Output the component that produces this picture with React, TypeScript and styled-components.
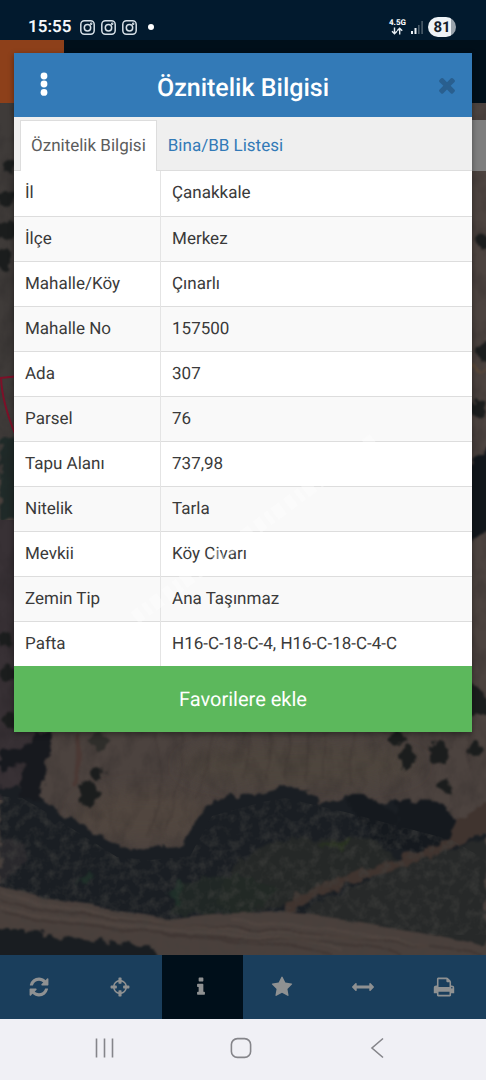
import React from "react";
import styled, { createGlobalStyle } from "styled-components";

const GlobalStyle = createGlobalStyle`
  *, *::before, *::after { box-sizing: border-box; }
  body {
    margin: 0;
    background: #021a2e;
    font-family: Roboto, "Noto Sans", sans-serif;
    color: #3a3a3a;
    text-rendering: geometricPrecision;
  }
  button { font-family: inherit; text-rendering: inherit; border: 0; padding: 0; cursor: pointer; }
`;

const Screen = styled.div`
  display: flex;
  flex-direction: column;
  min-height: 100vh;
`;

const StatusBar = styled.header`
  display: flex;
  align-items: center;
  justify-content: space-between;
  height: 40px;
  padding: 14px 30px 0 28px;
  background: #021a2e;
  color: #f4f8fb;
`;

const StatusGroup = styled.div<{ $gap: number }>`
  display: flex;
  align-items: center;
  gap: ${(p) => p.$gap}px;
`;

const Clock = styled.time`
  margin-right: 3px;
  font-size: 17px;
  line-height: 20px;
  font-weight: 600;
`;

const Dot = styled.span`
  width: 6px;
  height: 6px;
  margin-left: 5px;
  border-radius: 50%;
  background: #fff;
`;

const Network = styled.div`
  display: flex;
  flex-direction: column;
  align-items: center;
  font-size: 8px;
  line-height: 8px;
  font-weight: 800;
`;

const Battery = styled.div`
  width: 28px;
  height: 20px;
  border-radius: 10px;
  background: linear-gradient(90deg, #eef3f7 82%, #9aa4ad 82%);
  color: #14202b;
  font-size: 15px;
  line-height: 20px;
  font-weight: 700;
  text-align: center;
`;

const Stage = styled.main`
  flex: 1;
  display: grid;
  grid-template-columns: minmax(0, 1fr);
`;

const Backdrop = styled.div`
  grid-area: 1 / 1;
  display: flex;
  flex-direction: column;
`;

const AppHeader = styled.div`
  height: 63px;
  background: #000f1a;
`;

const MenuTile = styled.div`
  width: 64px;
  height: 63px;
  background: #8d401a;
`;

const MapArea = styled.div`
  flex: 1;
  position: relative;
  padding-top: 17px;
  background: #403835;
`;

const MapDrawing = styled.svg`
  position: absolute;
  inset: 0;
  width: 100%;
  height: 100%;
`;

const MapPanel = styled.div`
  position: relative;
  height: 51px;
  margin-left: 50%;
  background: #7e7e7e;
`;

const Dialog = styled.section`
  grid-area: 1 / 1;
  align-self: start;
  position: relative;
  margin: 13px 14px 0;
  background: #fff;
  box-shadow: 0 2px 6px rgba(0, 0, 0, 0.4);
`;

const DialogHeader = styled.div`
  display: grid;
  grid-template-columns: 60px 1fr 60px;
  align-items: center;
  height: 64px;
  background: #337ab7;
`;

const DialogTitle = styled.h1`
  margin: 0;
  padding-top: 8px;
  color: #fff;
  font-size: 25px;
  line-height: 30px;
  font-weight: 500;
  text-align: center;
  white-space: nowrap;
`;

const HeaderButton = styled.button<{ $side: "left" | "right" }>`
  display: flex;
  align-items: center;
  justify-content: ${(p) => (p.$side === "left" ? "center" : "flex-end")};
  height: 64px;
  padding-right: ${(p) => (p.$side === "left" ? 0 : 13)}px;
  background: none;
  color: ${(p) => (p.$side === "left" ? "#fff" : "#295f8f")};
`;

const Tabs = styled.div`
  display: flex;
  height: 54px;
  padding: 3px 6px 0;
  background: #efefef;
  border-bottom: 1px solid #ddd;
`;

const Tab = styled.button<{ $active?: boolean }>`
  height: 51px;
  margin-bottom: -1px;
  padding: 0 10px;
  border: 1px solid ${(p) => (p.$active ? "#ddd" : "transparent")};
  border-bottom: 0;
  background: ${(p) => (p.$active ? "#fff" : "transparent")};
  color: ${(p) => (p.$active ? "#5c5c5c" : "#337ab7")};
  font-size: 17px;
  line-height: 24px;
  white-space: nowrap;
`;

const Table = styled.table`
  width: 100%;
  border-collapse: collapse;
  table-layout: fixed;
  font-size: 17px;
  line-height: 24px;
`;

const Row = styled.tr`
  height: 45px;
  &:nth-child(even) { background: #f9f9f9; }
  & + & > * { border-top: 1px solid #ddd; }
`;

const Label = styled.th`
  width: 32%;
  padding: 0 11px;
  border-right: 1px solid #e4e4e4;
  font-weight: 400;
  text-align: left;
`;

const Value = styled.td`
  padding: 0 11px;
`;

const FavoriteButton = styled.button`
  display: block;
  width: 100%;
  height: 66px;
  background: #5cb85c;
  color: #fff;
  font-size: 20px;
  line-height: 24px;
`;

const Watermark = styled.svg`
  position: absolute;
  left: 106px;
  top: 370px;
  pointer-events: none;
`;

const Toolbar = styled.nav`
  display: grid;
  grid-template-columns: repeat(6, 1fr);
  height: 64px;
  background: #1a3e5c;
`;

const Tool = styled.button<{ $active?: boolean }>`
  display: flex;
  align-items: center;
  justify-content: center;
  padding-right: 3px;
  background: ${(p) => (p.$active ? "#000f1a" : "transparent")};
  color: #8f9192;
`;

const SystemNav = styled.nav`
  display: flex;
  align-items: center;
  justify-content: space-between;
  height: 61px;
  padding: 0 96px 4px 92px;
  background: #f0f0f5;
`;

const NavButton = styled.button`
  display: flex;
  background: none;
  color: #85858a;
`;

const glyphs = {
  refresh:
    "M1639 1056q0 5-1 7-64 268-268 434.5t-478 166.5q-146 0-282.5-55t-243.5-157l-129 129q-19 19-45 19t-45-19-19-45v-448q0-26 19-45t45-19h448q26 0 45 19t19 45-19 45l-137 137q71 66 161 102t187 36q134 0 250-65t186-179q11-17 53-117 8-23 30-23h192q13 0 22.5 9.5t9.5 22.5zm25-800v448q0 26-19 45t-45 19h-448q-26 0-45-19t-19-45 19-45l138-138q-148-137-349-137-134 0-250 65t-186 179q-11 17-53 117-8 23-30 23h-199q-13 0-22.5-9.5t-9.5-22.5v-7q65-268 270-434.5t480-166.5q146 0 284 55.5t245 156.5l130-129q19-19 45-19t45 19 19 45z",
  target:
    "M1325 1024h-109q-26 0-45-19t-19-45v-128q0-26 19-45t45-19h109q-32-108-112.5-188.5t-188.5-112.5v109q0 26-19 45t-45 19h-128q-26 0-45-19t-19-45v-109q-108 32-188.5 112.5t-112.5 188.5h109q26 0 45 19t19 45v128q0 26-19 45t-45 19h-109q32 108 112.5 188.5t188.5 112.5v-109q0-26 19-45t45-19h128q26 0 45 19t19 45v109q108-32 188.5-112.5t112.5-188.5zm339-192v128q0 26-19 45t-45 19h-143q-37 161-154.5 278.5t-278.5 154.5v143q0 26-19 45t-45 19h-128q-26 0-45-19t-19-45v-143q-161-37-278.5-154.5t-154.5-278.5h-143q-26 0-45-19t-19-45v-128q0-26 19-45t45-19h143q37-161 154.5-278.5t278.5-154.5v-143q0-26 19-45t45-19h128q26 0 45 19t19 45v143q161 37 278.5 154.5t154.5 278.5h143q26 0 45 19t19 45z",
  info:
    "M1216 1344v128q0 26-19 45t-45 19h-512q-26 0-45-19t-19-45v-128q0-26 19-45t45-19h64v-384h-64q-26 0-45-19t-19-45v-128q0-26 19-45t45-19h384q26 0 45 19t19 45v576h64q26 0 45 19t19 45zm-128-1152v192q0 26-19 45t-45 19h-256q-26 0-45-19t-19-45v-192q0-26 19-45t45-19h256q26 0 45 19t19 45z",
  star:
    "M1728 647q0 22-26 48l-363 354 86 500q1 7 1 20 0 21-10.5 35.5t-30.5 14.5q-19 0-40-12l-449-236-449 236q-22 12-40 12-21 0-31.5-14.5t-10.5-35.5q0-6 2-20l86-500-364-354q-25-27-25-48 0-37 56-46l502-73 225-455q19-41 49-41t49 41l225 455 502 73q56 9 56 46z",
  arrows:
    "M1792 896q0 26-19 45l-256 256q-19 19-45 19t-45-19-19-45v-128h-1024v128q0 26-19 45t-45 19-45-19l-256-256q-19-19-19-45t19-45l256-256q19-19 45-19t45 19 19 45v128h1024v-128q0-26 19-45t45-19 45 19l256 256q19 19 19 45z",
  print:
    "M448 1536h896v-256h-896v256zm0-640h896v-384h-160q-40 0-68-28t-28-68v-160h-640v640zm1152 64q0-26-19-45t-45-19-45 19-19 45 19 45 45 19 45-19 19-45zm128 0v416q0 13-9.5 22.5t-22.5 9.5h-224v160q0 40-28 68t-68 28h-960q-40 0-68-28t-28-68v-160h-224q-13 0-22.5-9.5t-9.5-22.5v-416q0-79 56.5-135.5t135.5-56.5h64v-544q0-40 28-68t68-28h672q40 0 88 20t76 48l152 152q28 28 48 76t20 88v256h64q79 0 135.5 56.5t56.5 135.5z",
  close:
    "M1490 1322q0 40-28 68l-136 136q-28 28-68 28t-68-28l-294-294-294 294q-28 28-68 28t-68-28l-136-136q-28-28-28-68t28-68l294-294-294-294q-28-28-28-68t28-68l136-136q28-28 68-28t68 28l294 294 294-294q28-28 68-28t68 28l136 136q28 28 28 68t-28 68l-294 294 294 294q28 28 28 68z",
};

type GlyphName = keyof typeof glyphs;

const Glyph = ({ name, size }: { name: GlyphName; size: number }) => (
  <svg width={size} height={size} viewBox="0 0 1792 1792" fill="currentColor" aria-hidden="true">
    <path d={glyphs[name]} />
  </svg>
);

const CameraIcon = () => (
  <svg width="15" height="15" viewBox="0 0 15 15" fill="none" stroke="#d7e0e7" strokeWidth="1.5" aria-hidden="true">
    <rect x="0.8" y="0.8" width="13.4" height="13.4" rx="3.6" />
    <circle cx="7.5" cy="7.7" r="3.2" />
    <circle cx="11.2" cy="3.8" r="0.5" />
  </svg>
);

const Satellite = () => (
  <MapDrawing viewBox="0 103 486 852" preserveAspectRatio="xMidYMax slice" aria-hidden="true">
    <defs>
      <filter id="rough" x="-5%" y="-5%" width="110%" height="110%" colorInterpolationFilters="sRGB">
        <feTurbulence type="fractalNoise" baseFrequency="0.09" numOctaves="3" seed="4" result="n" />
        <feDisplacementMap in="SourceGraphic" in2="n" scale="13" xChannelSelector="R" yChannelSelector="G" result="d" />
        <feGaussianBlur in="d" stdDeviation="1" />
      </filter>
      <filter id="wavy" x="-5%" y="-5%" width="110%" height="110%" colorInterpolationFilters="sRGB">
        <feTurbulence type="fractalNoise" baseFrequency="0.03" numOctaves="2" seed="6" result="n" />
        <feDisplacementMap in="SourceGraphic" in2="n" scale="9" xChannelSelector="R" yChannelSelector="G" result="d" />
        <feGaussianBlur in="d" stdDeviation="1.2" />
      </filter>
      <filter id="soft" x="-40%" y="-40%" width="180%" height="180%"><feGaussianBlur stdDeviation="9" /></filter>
      <filter id="leaves" x="0" y="0" width="100%" height="100%" colorInterpolationFilters="sRGB">
        <feTurbulence type="fractalNoise" baseFrequency="0.1" numOctaves="3" seed="9" />
        <feColorMatrix values="0 0 0 0 0.26  0 0 0 0 0.26  0 0 0 0 0.25  2.4 0 0 0 -1" result="n" />
        <feComposite in="n" in2="SourceAlpha" operator="in" />
      </filter>
      <filter id="grain" x="0" y="0" width="100%" height="100%" colorInterpolationFilters="sRGB">
        <feTurbulence type="fractalNoise" baseFrequency="0.06 0.04" numOctaves="4" seed="2" />
        <feColorMatrix values="0 0 0 0 0.1  0 0 0 0 0.09  0 0 0 0 0.1  1.6 0 0 0 -0.65" />
      </filter>
    </defs>
    <rect y="103" width="486" height="852" fill="#4c433f" />
    <path d="M0 103H30V480H0z" fill="#3f3b39" />
    <path d="M0 440H40V520H0z" fill="#202b29" filter="url(#rough)" />
    <path d="M0 520H30V725L44 733 34 800H0z" fill="#383135" />
    <ellipse cx="145" cy="815" rx="70" ry="26" fill="#544a3f" opacity=".6" filter="url(#soft)" />
    <ellipse cx="300" cy="765" rx="120" ry="22" fill="#4f463e" opacity=".7" filter="url(#soft)" />
    <g stroke="#39302e" strokeWidth="1.6" opacity=".35" fill="none" filter="url(#wavy)">
      <path d="M155 733Q170 790 145 835M180 733Q185 780 165 830M215 733Q205 780 195 800M250 733L245 780M270 733L268 778M290 733L285 775M308 733L305 780M325 733L322 780M355 733L350 785M470 733V770" />
      <path d="M77 733Q80 760 74 785" stroke="#4a2722" strokeWidth="4" />
    </g>
    <rect y="103" width="486" height="852" filter="url(#grain)" opacity=".25" />
    <g filter="url(#rough)">
      <path d="M0 788L22 788 38 797 62 812 88 829 117 845 150 848 184 846 192 826 206 806 228 796 240 796 262 792 285 786 315 793 322 806 345 797 372 806 395 801 420 800 452 812 460 830 486 835V965H0z" fill="#1a1e23" />
      <path d="M36 733H50L46 770 40 804 20 796 24 762 8 768 0 775V752L28 746z" fill="#17191e" />
      <path d="M0 840L28 843 20 868 0 885z" fill="#302c31" opacity=".7" />
      <path d="M235 865L262 845 300 838 372 838 395 858 350 882 290 905 235 915 215 900z" fill="#282b28" opacity=".8" />
      <path d="M310 905L400 866 486 838V965H290z" fill="#272929" />
      <path d="M180 885Q235 865 280 890L250 915H170z" fill="#222926" opacity=".8" />
      <path d="M316 845L350 838 346 850z" fill="#29351f" opacity=".8" />
      <path d="M166 895L182 878 188 887 175 904zM78 884L90 870 94 878z" fill="#21332a" opacity=".8" />
      <path d="M466 815L490 800V830L443 852 398 868 355 881 310 900 280 920 288 901 340 878 400 858z" fill="#40342f" />
      <path d="M346 800Q360 788 380 804L398 814 396 850 375 840z" fill="#15191e" />
      <path d="M398 802Q435 792 458 820L446 840 425 850 400 850z" fill="#15191e" />
    </g>
    <path d="M0 796L22 798 38 807 117 857 150 860 190 856 212 816 262 802 285 798 345 812 452 840 486 860V935H0z" filter="url(#leaves)" opacity=".5" />
    <g filter="url(#wavy)">
      <path d="M-10 884L40 897 90 906 168 919 210 914 280 911 350 920 420 932 500 950V965H-10z" fill="#4a403c" />
      <g stroke="#352c2a" strokeWidth="2" fill="none" opacity=".5">
        <path d="M0 900Q100 922 200 926T486 955M0 912Q100 932 240 938T400 955M160 934L270 944 330 955" />
      </g>
      <g stroke="#5a4d46" strokeWidth="3" fill="none" opacity=".4">
        <path d="M0 892Q60 912 170 924T400 940M0 907Q80 924 200 932T340 950M230 920L340 930 430 948" />
      </g>
    </g>
    <path d="M0 884L90 906 168 919 280 911 420 932 486 950V955H0z" filter="url(#leaves)" opacity=".25" />
    <g filter="url(#rough)">
      <path d="M-10 930L25 930 60 936 105 942 155 947 165 965H-10z" fill="#191d21" />
      <g fill="#1b1d1d">
        <ellipse cx="88" cy="793" rx="10" ry="12" /><circle cx="96" cy="773" r="6" />
        <ellipse cx="99" cy="741" rx="9" ry="9" fill="#2f2e2b" />
        <ellipse cx="407" cy="757" rx="9" ry="11" /><ellipse cx="398" cy="738" rx="10" ry="6" />
        <ellipse cx="439" cy="753" rx="11" ry="11" /><circle cx="476" cy="749" r="7" />
        <circle cx="446" cy="786" r="7" />
        <circle cx="9" cy="165" r="6" /><circle cx="6" cy="199" r="7" />
        <circle cx="7" cy="230" r="10" /><circle cx="3" cy="258" r="10" />
        <circle cx="6" cy="640" r="8" /><circle cx="8" cy="674" r="8" /><circle cx="10" cy="720" r="7" />
        <circle cx="485" cy="243" r="8" /><circle cx="486" cy="352" r="9" />
        <ellipse cx="478" cy="408" rx="8" ry="9" />
        <path d="M466 465L500 440V525L462 548z" fill="#11161b" />
        <path d="M466 680L484 690 490 715H466z" />
      </g>
      <path d="M466 368H490" stroke="#5d4938" strokeWidth="2" />
    </g>
    <path d="M0 378L20 376M1 378Q2 403 16 436" fill="none" stroke="#7d1028" strokeWidth="2" />
  </MapDrawing>
);

const attributes: [string, string][] = [
  ["İl", "Çanakkale"],
  ["İlçe", "Merkez"],
  ["Mahalle/Köy", "Çınarlı"],
  ["Mahalle No", "157500"],
  ["Ada", "307"],
  ["Parsel", "76"],
  ["Tapu Alanı", "737,98"],
  ["Nitelik", "Tarla"],
  ["Mevkii", "Köy Civarı"],
  ["Zemin Tip", "Ana Taşınmaz"],
  ["Pafta", "H16-C-18-C-4, H16-C-18-C-4-C"],
];

const tools: { name: GlyphName; label: string; active?: boolean }[] = [
  { name: "refresh", label: "Yenile" },
  { name: "target", label: "Konum" },
  { name: "info", label: "Bilgi", active: true },
  { name: "star", label: "Favoriler" },
  { name: "arrows", label: "Ölçüm" },
  { name: "print", label: "Yazdır" },
];

export default function App() {
  return (
    <Screen>
      <GlobalStyle />
      <StatusBar>
        <StatusGroup $gap={6}>
          <Clock>15:55</Clock>
          <CameraIcon />
          <CameraIcon />
          <CameraIcon />
          <Dot />
        </StatusGroup>
        <StatusGroup $gap={5}>
          <Network>
            <span>4.5G</span>
            <svg width="12" height="8" viewBox="0 0 12 8" fill="none" stroke="#e6edf2" strokeWidth="1.4" aria-hidden="true">
              <path d="M3.5 .5V6.5M1 4.2L3.5 6.8 6 4.2M8.7 7.5V1.5M6.2 3.8L8.7 1.2 11.2 3.8" />
            </svg>
          </Network>
          <svg width="12" height="13" viewBox="0 0 12 13" aria-hidden="true">
            <path d="M0 10h2v3H0zM3.5 7h2v6h-2z" fill="#eef3f7" />
            <path d="M7 4h1.6v9H7zM10.3 0h1.6v13h-1.6z" fill="#4b5c6a" />
          </svg>
          <Battery>81</Battery>
        </StatusGroup>
      </StatusBar>

      <Stage>
        <Backdrop>
          <AppHeader>
            <MenuTile />
          </AppHeader>
          <MapArea>
            <Satellite />
            <MapPanel />
          </MapArea>
        </Backdrop>

        <Dialog role="dialog" aria-labelledby="dialog-title">
          <DialogHeader>
            <HeaderButton $side="left" aria-label="Menü">
              <svg width="8" height="26" viewBox="0 0 8 26" fill="currentColor" aria-hidden="true">
                <circle cx="4" cy="4" r="3.4" />
                <circle cx="4" cy="12" r="3.4" />
                <circle cx="4" cy="20.4" r="3.4" />
              </svg>
            </HeaderButton>
            <DialogTitle id="dialog-title">Öznitelik Bilgisi</DialogTitle>
            <HeaderButton $side="right" aria-label="Kapat">
              <Glyph name="close" size={24} />
            </HeaderButton>
          </DialogHeader>
          <Tabs role="tablist">
            <Tab role="tab" aria-selected="true" $active>Öznitelik Bilgisi</Tab>
            <Tab role="tab" aria-selected="false">Bina/BB Listesi</Tab>
          </Tabs>
          <Table>
            <tbody>
              {attributes.map(([label, value]) => (
                <Row key={label}>
                  <Label scope="row">{label}</Label>
                  <Value>{value}</Value>
                </Row>
              ))}
            </tbody>
          </Table>
          <FavoriteButton>Favorilere ekle</FavoriteButton>
          <Watermark width="270" height="210" viewBox="0 0 270 210" aria-hidden="true">
            <path d="M15 195L258 14" stroke="#fff" strokeWidth="14" strokeDasharray="8 5 5 4 10 6" opacity=".35" />
          </Watermark>
        </Dialog>
      </Stage>

      <Toolbar>
        {tools.map((tool) => (
          <Tool key={tool.name} $active={tool.active} aria-label={tool.label}>
            <Glyph name={tool.name} size={22} />
          </Tool>
        ))}
      </Toolbar>
      <SystemNav>
        <NavButton aria-label="Son uygulamalar">
          <svg width="24" height="22" viewBox="0 0 24 22" fill="none" stroke="currentColor" strokeWidth="1.6" aria-hidden="true">
            <path d="M4.5 1.5V20.5M12.5 1.5V20.5M20.5 1.5V20.5" />
          </svg>
        </NavButton>
        <NavButton aria-label="Ana ekran">
          <svg width="22" height="22" viewBox="0 0 22 22" fill="none" stroke="currentColor" strokeWidth="1.6" aria-hidden="true">
            <rect x="1.4" y="1.6" width="19.2" height="18.8" rx="6" />
          </svg>
        </NavButton>
        <NavButton aria-label="Geri">
          <svg width="24" height="22" viewBox="0 0 24 22" fill="none" stroke="currentColor" strokeWidth="1.6" aria-hidden="true">
            <path d="M17 1.5L6 11 17 20.5" />
          </svg>
        </NavButton>
      </SystemNav>
    </Screen>
  );
}
